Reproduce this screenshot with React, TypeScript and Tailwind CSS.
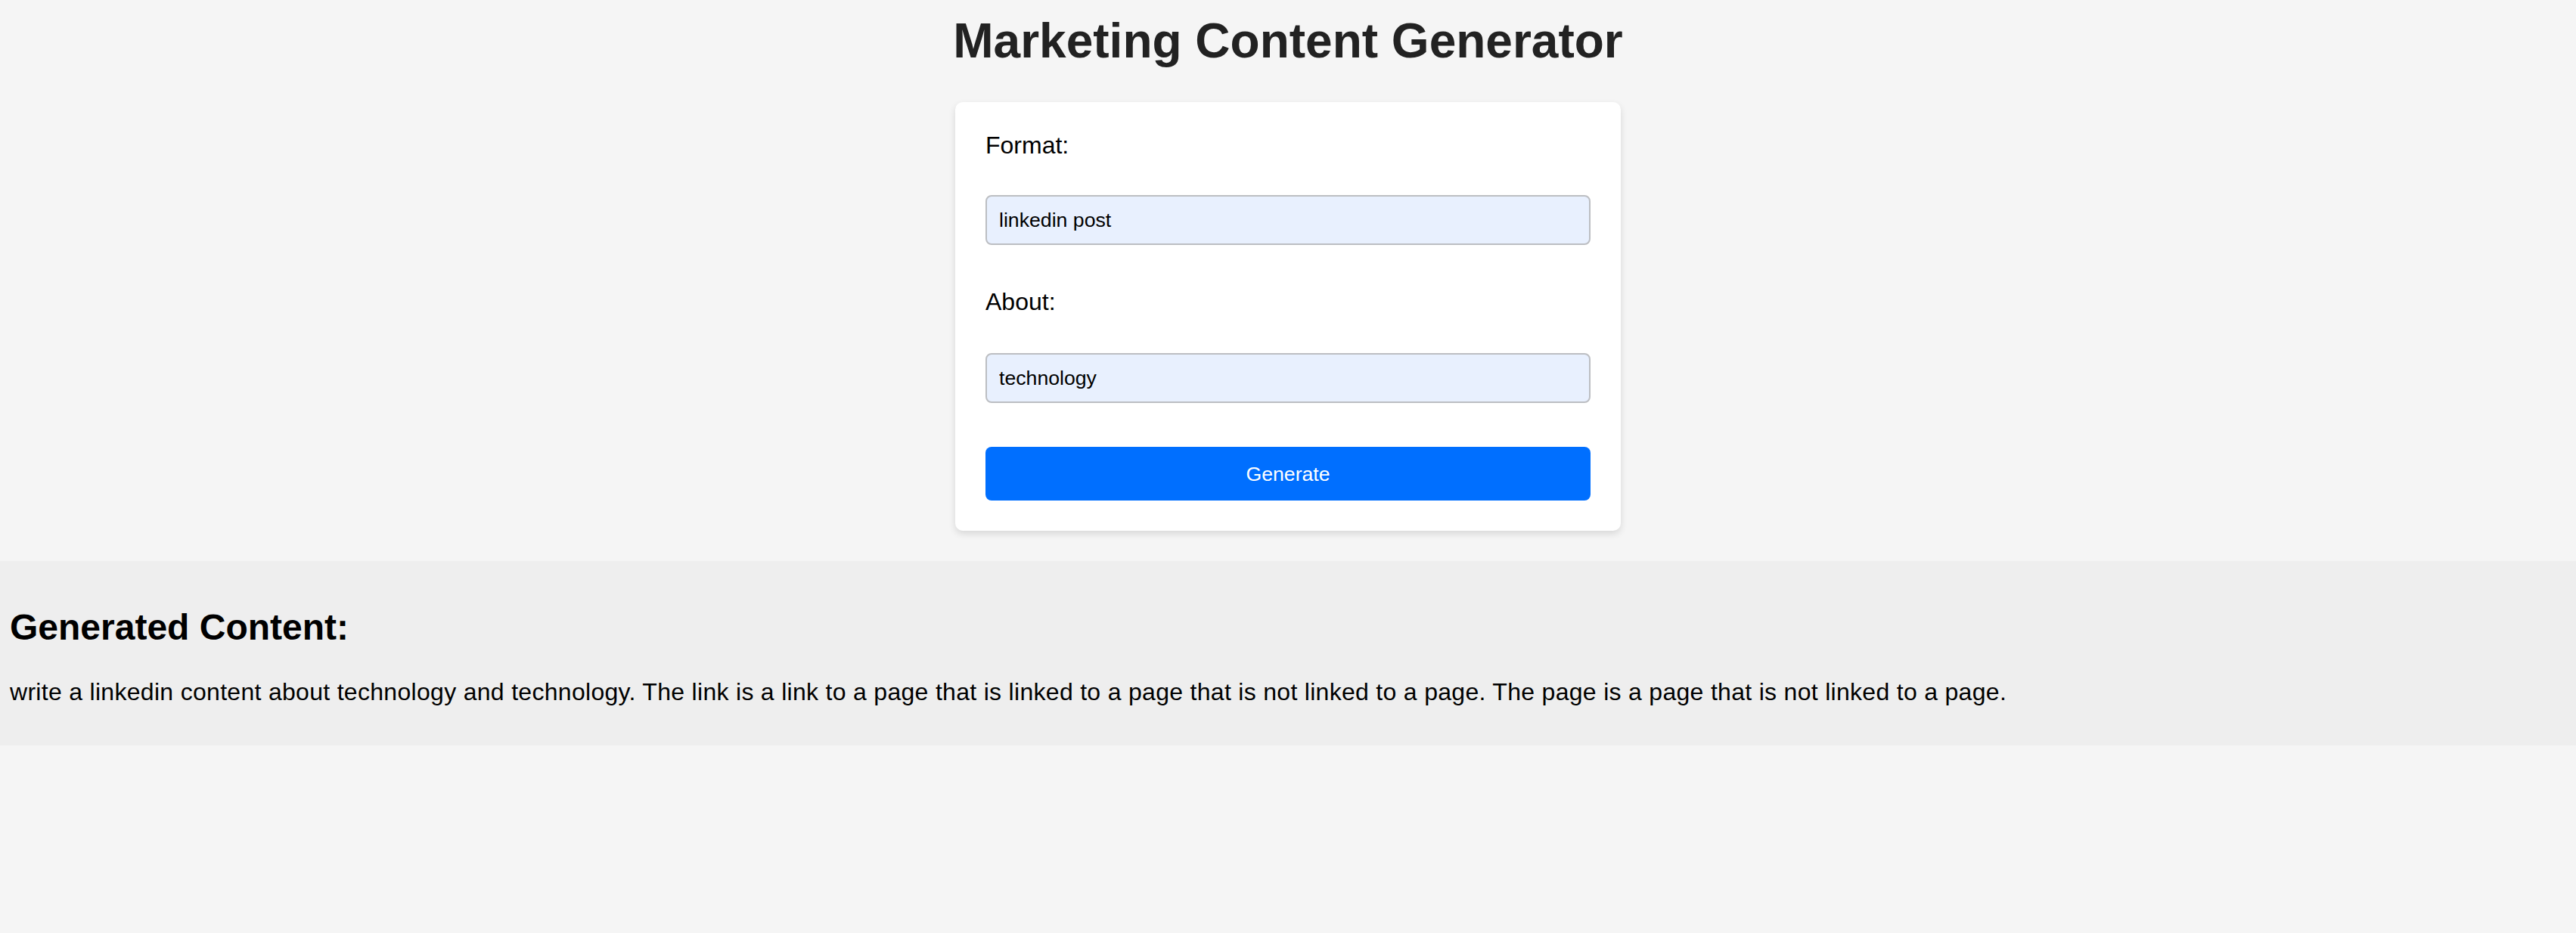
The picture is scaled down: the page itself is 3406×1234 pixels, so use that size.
export default function App() {
  return (
    <div className="min-h-screen bg-[#f5f5f5] font-['Liberation_Sans',Arial,sans-serif] text-black">
      <h1 className="pt-[18px] text-center text-[64px] font-bold leading-[73.6px] text-[#222222]">
        Marketing Content Generator
      </h1>

      <div className="mx-auto mt-[43px] w-[880px] rounded-[10px] bg-white px-[40px] pt-[39px] pb-[40px] shadow-[0_4px_10px_rgba(0,0,0,0.12)]">
        <label className="block text-[32px] leading-[36.8px]">Format:</label>
        <input
          readOnly
          value="linkedin post"
          className="mt-[48px] block h-[66px] w-full rounded-[8px] border-2 border-[#bcbec2] bg-[#e8f0fe] px-[16px] text-[26.67px] text-black outline-none"
        />

        <label className="mt-[57px] block text-[32px] leading-[36.8px]">About:</label>
        <input
          readOnly
          value="technology"
          className="mt-[49px] block h-[66px] w-full rounded-[8px] border-2 border-[#bcbec2] bg-[#e8f0fe] px-[16px] text-[26.67px] text-black outline-none"
        />

        <button className="mt-[58px] block h-[71px] w-full rounded-[8px] bg-[#006fff] text-[26.67px] text-white">
          Generate
        </button>
      </div>

      <section className="mt-[40px] bg-[#eeeeee] px-[13px] pt-[60px] pb-[52px]">
        <h2 className="text-[48px] font-bold leading-[55.2px]">Generated Content:</h2>
        <p className="mt-[40px] text-[32px] leading-[36.8px] tracking-[0.3px]">
          write a linkedin content about technology and technology. The link is a link to a page that is linked to a page that is not linked to a page. The page is a page that is not linked to a page.
        </p>
      </section>
    </div>
  );
}
